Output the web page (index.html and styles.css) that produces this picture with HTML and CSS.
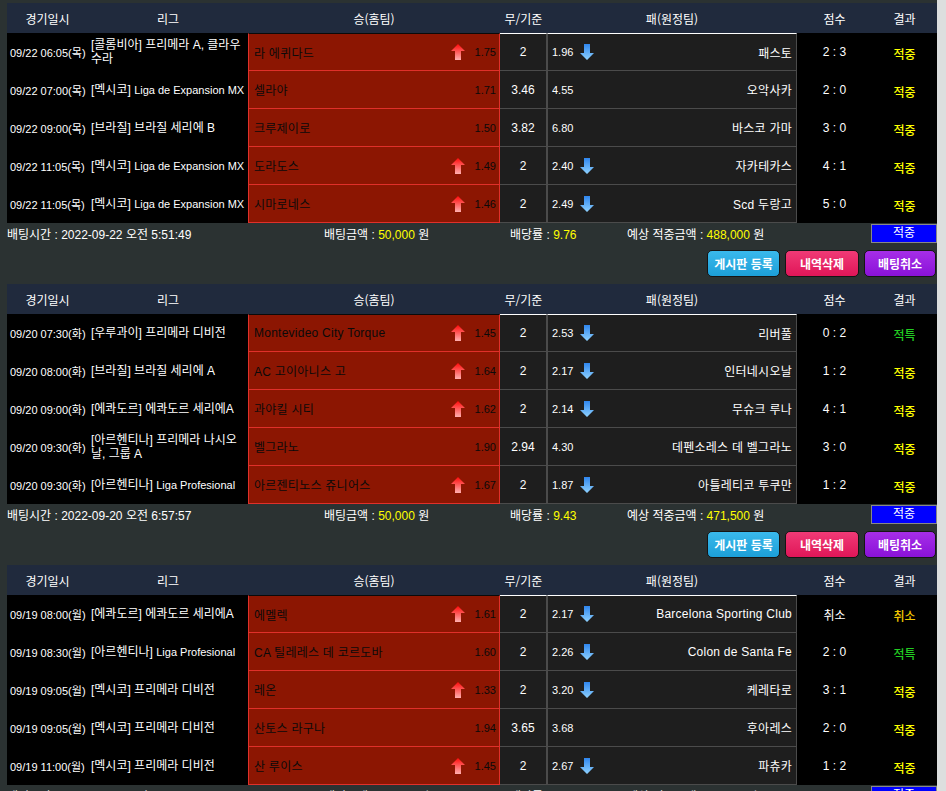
FILE: index.html
```html
<!DOCTYPE html>
<html lang="ko">
<head>
<meta charset="UTF-8">
<title>배팅내역</title>
<link rel="stylesheet" href="styles.css">
</head>
<body>
<svg class="defs" width="0" height="0">
  <defs>
    <linearGradient id="upGrad" x1="0" y1="0" x2="0" y2="1">
      <stop offset="0" stop-color="#ff0a0a"/>
      <stop offset="1" stop-color="#ffb0b0"/>
    </linearGradient>
    <linearGradient id="downGrad" x1="0" y1="0" x2="0" y2="1">
      <stop offset="0" stop-color="#2f86ee"/>
      <stop offset="1" stop-color="#8fd2ff"/>
    </linearGradient>
  </defs>
</svg>

<div class="page">

  <!-- slip 1 -->
  <div class="slip">
    <div class="slip-head">
      <div>경기일시</div><div>리그</div><div>승(홈팀)</div><div>무/기준</div><div>패(원정팀)</div><div>점수</div><div>결과</div>
    </div>
    <div class="slip-row">
      <div class="c-date">09/22 06:05(목)</div>
      <div class="c-league">[콜롬비아] 프리메라 A, 클라우수라</div>
      <div class="c-home"><span class="team">라 에퀴다드</span><svg class="arr" viewBox="0 0 14 16"><polygon points="7,0 14,7 10,7 10,16 4,16 4,7 0,7" fill="url(#upGrad)"/></svg><span class="odd">1.75</span></div>
      <div class="c-draw">2</div>
      <div class="c-away"><span class="odd">1.96</span><svg class="arr" viewBox="0 0 14 16"><polygon points="4,0 10,0 10,9 14,9 7,16 0,9 4,9" fill="url(#downGrad)"/></svg><span class="team">패스토</span></div>
      <div class="c-score">2 : 3</div>
      <div class="c-result hit">적중</div>
    </div>
    <div class="slip-row">
      <div class="c-date">09/22 07:00(목)</div>
      <div class="c-league">[멕시코] <span class="en">Liga de Expansion MX</span></div>
      <div class="c-home"><span class="team">셀라야</span><span class="odd">1.71</span></div>
      <div class="c-draw">3.46</div>
      <div class="c-away"><span class="odd">4.55</span><span class="team">오악사카</span></div>
      <div class="c-score">2 : 0</div>
      <div class="c-result hit">적중</div>
    </div>
    <div class="slip-row">
      <div class="c-date">09/22 09:00(목)</div>
      <div class="c-league">[브라질] 브라질 세리에 B</div>
      <div class="c-home"><span class="team">크루제이로</span><span class="odd">1.50</span></div>
      <div class="c-draw">3.82</div>
      <div class="c-away"><span class="odd">6.80</span><span class="team">바스코 가마</span></div>
      <div class="c-score">3 : 0</div>
      <div class="c-result hit">적중</div>
    </div>
    <div class="slip-row">
      <div class="c-date">09/22 11:05(목)</div>
      <div class="c-league">[멕시코] <span class="en">Liga de Expansion MX</span></div>
      <div class="c-home"><span class="team">도라도스</span><svg class="arr" viewBox="0 0 14 16"><polygon points="7,0 14,7 10,7 10,16 4,16 4,7 0,7" fill="url(#upGrad)"/></svg><span class="odd">1.49</span></div>
      <div class="c-draw">2</div>
      <div class="c-away"><span class="odd">2.40</span><svg class="arr" viewBox="0 0 14 16"><polygon points="4,0 10,0 10,9 14,9 7,16 0,9 4,9" fill="url(#downGrad)"/></svg><span class="team">자카테카스</span></div>
      <div class="c-score">4 : 1</div>
      <div class="c-result hit">적중</div>
    </div>
    <div class="slip-row">
      <div class="c-date">09/22 11:05(목)</div>
      <div class="c-league">[멕시코] <span class="en">Liga de Expansion MX</span></div>
      <div class="c-home"><span class="team">시마로네스</span><svg class="arr" viewBox="0 0 14 16"><polygon points="7,0 14,7 10,7 10,16 4,16 4,7 0,7" fill="url(#upGrad)"/></svg><span class="odd">1.46</span></div>
      <div class="c-draw">2</div>
      <div class="c-away"><span class="odd">2.49</span><svg class="arr" viewBox="0 0 14 16"><polygon points="4,0 10,0 10,9 14,9 7,16 0,9 4,9" fill="url(#downGrad)"/></svg><span class="team">Scd 두랑고</span></div>
      <div class="c-score">5 : 0</div>
      <div class="c-result hit">적중</div>
    </div>
    <div class="slip-foot">
      <span class="f-time">배팅시간 : 2022-09-22 오전 5:51:49</span>
      <span class="f-amount">배팅금액 : <b>50,000</b> 원</span>
      <span class="f-rate">배당률 : <b>9.76</b></span>
      <span class="f-win">예상 적중금액 : <b>488,000</b> 원</span>
      <span class="f-status">적중</span>
    </div>
    <div class="slip-actions">
      <button class="btn btn-board">게시판 등록</button>
      <button class="btn btn-delete">내역삭제</button>
      <button class="btn btn-cancel">배팅취소</button>
    </div>
  </div>

  <!-- slip 2 -->
  <div class="slip">
    <div class="slip-head">
      <div>경기일시</div><div>리그</div><div>승(홈팀)</div><div>무/기준</div><div>패(원정팀)</div><div>점수</div><div>결과</div>
    </div>
    <div class="slip-row">
      <div class="c-date">09/20 07:30(화)</div>
      <div class="c-league">[우루과이] 프리메라 디비전</div>
      <div class="c-home"><span class="team">Montevideo City Torque</span><svg class="arr" viewBox="0 0 14 16"><polygon points="7,0 14,7 10,7 10,16 4,16 4,7 0,7" fill="url(#upGrad)"/></svg><span class="odd">1.45</span></div>
      <div class="c-draw">2</div>
      <div class="c-away"><span class="odd">2.53</span><svg class="arr" viewBox="0 0 14 16"><polygon points="4,0 10,0 10,9 14,9 7,16 0,9 4,9" fill="url(#downGrad)"/></svg><span class="team">리버풀</span></div>
      <div class="c-score">0 : 2</div>
      <div class="c-result special">적특</div>
    </div>
    <div class="slip-row">
      <div class="c-date">09/20 08:00(화)</div>
      <div class="c-league">[브라질] 브라질 세리에 A</div>
      <div class="c-home"><span class="team">AC 고이아니스 고</span><svg class="arr" viewBox="0 0 14 16"><polygon points="7,0 14,7 10,7 10,16 4,16 4,7 0,7" fill="url(#upGrad)"/></svg><span class="odd">1.64</span></div>
      <div class="c-draw">2</div>
      <div class="c-away"><span class="odd">2.17</span><svg class="arr" viewBox="0 0 14 16"><polygon points="4,0 10,0 10,9 14,9 7,16 0,9 4,9" fill="url(#downGrad)"/></svg><span class="team">인터네시오날</span></div>
      <div class="c-score">1 : 2</div>
      <div class="c-result hit">적중</div>
    </div>
    <div class="slip-row">
      <div class="c-date">09/20 09:00(화)</div>
      <div class="c-league">[에콰도르] 에콰도르 세리에A</div>
      <div class="c-home"><span class="team">과야킬 시티</span><svg class="arr" viewBox="0 0 14 16"><polygon points="7,0 14,7 10,7 10,16 4,16 4,7 0,7" fill="url(#upGrad)"/></svg><span class="odd">1.62</span></div>
      <div class="c-draw">2</div>
      <div class="c-away"><span class="odd">2.14</span><svg class="arr" viewBox="0 0 14 16"><polygon points="4,0 10,0 10,9 14,9 7,16 0,9 4,9" fill="url(#downGrad)"/></svg><span class="team">무슈크 루나</span></div>
      <div class="c-score">4 : 1</div>
      <div class="c-result hit">적중</div>
    </div>
    <div class="slip-row">
      <div class="c-date">09/20 09:30(화)</div>
      <div class="c-league">[아르헨티나] 프리메라 나시오날, 그룹 A</div>
      <div class="c-home"><span class="team">벨그라노</span><span class="odd">1.90</span></div>
      <div class="c-draw">2.94</div>
      <div class="c-away"><span class="odd">4.30</span><span class="team">데펜소레스 데 벨그라노</span></div>
      <div class="c-score">3 : 0</div>
      <div class="c-result hit">적중</div>
    </div>
    <div class="slip-row">
      <div class="c-date">09/20 09:30(화)</div>
      <div class="c-league">[아르헨티나] <span class="en">Liga Profesional</span></div>
      <div class="c-home"><span class="team">아르젠티노스 쥬니어스</span><svg class="arr" viewBox="0 0 14 16"><polygon points="7,0 14,7 10,7 10,16 4,16 4,7 0,7" fill="url(#upGrad)"/></svg><span class="odd">1.67</span></div>
      <div class="c-draw">2</div>
      <div class="c-away"><span class="odd">1.87</span><svg class="arr" viewBox="0 0 14 16"><polygon points="4,0 10,0 10,9 14,9 7,16 0,9 4,9" fill="url(#downGrad)"/></svg><span class="team">아틀레티코 투쿠만</span></div>
      <div class="c-score">1 : 2</div>
      <div class="c-result hit">적중</div>
    </div>
    <div class="slip-foot">
      <span class="f-time">배팅시간 : 2022-09-20 오전 6:57:57</span>
      <span class="f-amount">배팅금액 : <b>50,000</b> 원</span>
      <span class="f-rate">배당률 : <b>9.43</b></span>
      <span class="f-win">예상 적중금액 : <b>471,500</b> 원</span>
      <span class="f-status">적중</span>
    </div>
    <div class="slip-actions">
      <button class="btn btn-board">게시판 등록</button>
      <button class="btn btn-delete">내역삭제</button>
      <button class="btn btn-cancel">배팅취소</button>
    </div>
  </div>

  <!-- slip 3 -->
  <div class="slip">
    <div class="slip-head">
      <div>경기일시</div><div>리그</div><div>승(홈팀)</div><div>무/기준</div><div>패(원정팀)</div><div>점수</div><div>결과</div>
    </div>
    <div class="slip-row">
      <div class="c-date">09/19 08:00(월)</div>
      <div class="c-league">[에콰도르] 에콰도르 세리에A</div>
      <div class="c-home"><span class="team">에멜렉</span><svg class="arr" viewBox="0 0 14 16"><polygon points="7,0 14,7 10,7 10,16 4,16 4,7 0,7" fill="url(#upGrad)"/></svg><span class="odd">1.61</span></div>
      <div class="c-draw">2</div>
      <div class="c-away"><span class="odd">2.17</span><svg class="arr" viewBox="0 0 14 16"><polygon points="4,0 10,0 10,9 14,9 7,16 0,9 4,9" fill="url(#downGrad)"/></svg><span class="team">Barcelona Sporting Club</span></div>
      <div class="c-score">취소</div>
      <div class="c-result cancel">취소</div>
    </div>
    <div class="slip-row">
      <div class="c-date">09/19 08:30(월)</div>
      <div class="c-league">[아르헨티나] <span class="en">Liga Profesional</span></div>
      <div class="c-home"><span class="team">CA 틸레레스 데 코르도바</span><span class="odd">1.60</span></div>
      <div class="c-draw">2</div>
      <div class="c-away"><span class="odd">2.26</span><svg class="arr" viewBox="0 0 14 16"><polygon points="4,0 10,0 10,9 14,9 7,16 0,9 4,9" fill="url(#downGrad)"/></svg><span class="team">Colon de Santa Fe</span></div>
      <div class="c-score">2 : 0</div>
      <div class="c-result special">적특</div>
    </div>
    <div class="slip-row">
      <div class="c-date">09/19 09:05(월)</div>
      <div class="c-league">[멕시코] 프리메라 디비전</div>
      <div class="c-home"><span class="team">레온</span><svg class="arr" viewBox="0 0 14 16"><polygon points="7,0 14,7 10,7 10,16 4,16 4,7 0,7" fill="url(#upGrad)"/></svg><span class="odd">1.33</span></div>
      <div class="c-draw">2</div>
      <div class="c-away"><span class="odd">3.20</span><svg class="arr" viewBox="0 0 14 16"><polygon points="4,0 10,0 10,9 14,9 7,16 0,9 4,9" fill="url(#downGrad)"/></svg><span class="team">케레타로</span></div>
      <div class="c-score">3 : 1</div>
      <div class="c-result hit">적중</div>
    </div>
    <div class="slip-row">
      <div class="c-date">09/19 09:05(월)</div>
      <div class="c-league">[멕시코] 프리메라 디비전</div>
      <div class="c-home"><span class="team">산토스 라구나</span><span class="odd">1.94</span></div>
      <div class="c-draw">3.65</div>
      <div class="c-away"><span class="odd">3.68</span><span class="team">후아레스</span></div>
      <div class="c-score">2 : 0</div>
      <div class="c-result hit">적중</div>
    </div>
    <div class="slip-row">
      <div class="c-date">09/19 11:00(월)</div>
      <div class="c-league">[멕시코] 프리메라 디비전</div>
      <div class="c-home"><span class="team">산 루이스</span><svg class="arr" viewBox="0 0 14 16"><polygon points="7,0 14,7 10,7 10,16 4,16 4,7 0,7" fill="url(#upGrad)"/></svg><span class="odd">1.45</span></div>
      <div class="c-draw">2</div>
      <div class="c-away"><span class="odd">2.67</span><svg class="arr" viewBox="0 0 14 16"><polygon points="4,0 10,0 10,9 14,9 7,16 0,9 4,9" fill="url(#downGrad)"/></svg><span class="team">파츄카</span></div>
      <div class="c-score">1 : 2</div>
      <div class="c-result hit">적중</div>
    </div>
    <div class="slip-foot">
      <span class="f-time">배팅시간 : 2022-09-19 오전 5:58:45</span>
      <span class="f-amount">배팅금액 : <b>50,000</b> 원</span>
      <span class="f-rate">배당률 : <b>1.45</b></span>
      <span class="f-win">예상 적중금액 : <b>72,500</b> 원</span>
      <span class="f-status">적중</span>
    </div>
  </div>

</div>
</body>
</html>
```

FILE: styles.css
```css
html {
  background: linear-gradient(to right, #2b3232 937px, #dcdede 937px);
  overflow: hidden;
}
body {
  margin: 0;
  font-family: "Liberation Sans", "Noto Sans CJK KR", sans-serif;
  font-size: 12px;
  color: #fff;
}
.defs {
  position: absolute;
}
.page {
  width: 930px;
  padding: 3px 0 0 7px;
}

/* table grid */
.slip-head,
.slip-row {
  display: grid;
  grid-template-columns: 81px 160px 252px 47px 250px 75px 65px;
}
.slip-head {
  height: 30px;
  background: #202a3d;
}
.slip-head div {
  display: flex;
  align-items: center;
  justify-content: center;
  font-family: "Noto Sans CJK KR", sans-serif;
}
.slip-row {
  height: 38px;
  background: #000;
}
.slip-row > div {
  box-sizing: border-box;
  display: flex;
  align-items: center;
}
.c-date {
  padding-left: 3px;
  font-size: 11px;
  white-space: nowrap;
}
/* flex would turn the latin span into its own item, so keep it inline */
.slip-row > .c-league {
  display: block;
  align-self: center;
  padding: 0 1px 0 3px;
  font-size: 12px;
  line-height: 14px;
}
.c-league .en {
  font-size: 11px;
}
.c-home {
  background: #8c1602;
  border: 1px solid #e0302a;
  border-top: 0;
  padding: 0 3px 0 5px;
  color: #0a0a0a;
}
.c-draw,
.c-away {
  background: #1e1e1e;
  border: 1px solid #4b4b4b;
  border-top: 0;
}
.c-draw {
  justify-content: center;
  border-left: 0;
}
.c-away {
  padding: 0 4px;
}
.slip-head + .slip-row .c-home,
.slip-head + .slip-row .c-draw,
.slip-head + .slip-row .c-away {
  border-top-width: 1px;
  border-top-style: solid;
}
.team {
  font-size: 12px;
  letter-spacing: 0.25px;
  white-space: nowrap;
}
.c-home .team {
  flex: 1;
}
.c-away .team {
  margin-left: auto;
}
.odd {
  font-size: 11px;
}
.arr {
  width: 14px;
  height: 16px;
}
.c-home .arr {
  margin-right: 10px;
}
.c-away .arr {
  margin-left: 7px;
}
.c-score {
  justify-content: center;
}
.c-result {
  justify-content: center;
  padding-top: 2px;
  font-family: "Noto Sans CJK KR", sans-serif;
  font-weight: 500;
}
.hit { color: #ffff00; }
.special { color: #22cc22; }
.cancel { color: #f2c800; }

/* footer line */
.slip-foot {
  display: flex;
  align-items: center;
  height: 20px;
}
.slip-foot b {
  font-weight: normal;
  color: #ffff00;
}
.f-time { width: 317px; }
.f-amount { width: 186px; }
.f-rate { width: 117px; }
.f-win { width: 244px; }
.f-status {
  box-sizing: border-box;
  width: 66px;
  height: 19px;
  line-height: 17px;
  background: #0000ff;
  border: 1px solid #888;
  text-align: center;
}

/* buttons */
.slip-actions {
  display: flex;
  justify-content: flex-end;
  gap: 5px;
  height: 41px;
  box-sizing: border-box;
  padding: 7px 1px 0 0;
}
.btn {
  height: 27px;
  border: 1px solid #151515;
  border-radius: 5px;
  color: #fff;
  font-family: "Noto Sans CJK KR", sans-serif;
  font-size: 12px;
  font-weight: bold;
  padding: 0;
  cursor: pointer;
}
.btn-board {
  width: 73px;
  background: linear-gradient(#3ab9ec, #1c9fd8);
}
.btn-delete {
  width: 74px;
  background: linear-gradient(#f03a76, #e01658);
}
.btn-cancel {
  width: 72px;
  background: linear-gradient(#a62ee8, #8a12d8);
}
```
